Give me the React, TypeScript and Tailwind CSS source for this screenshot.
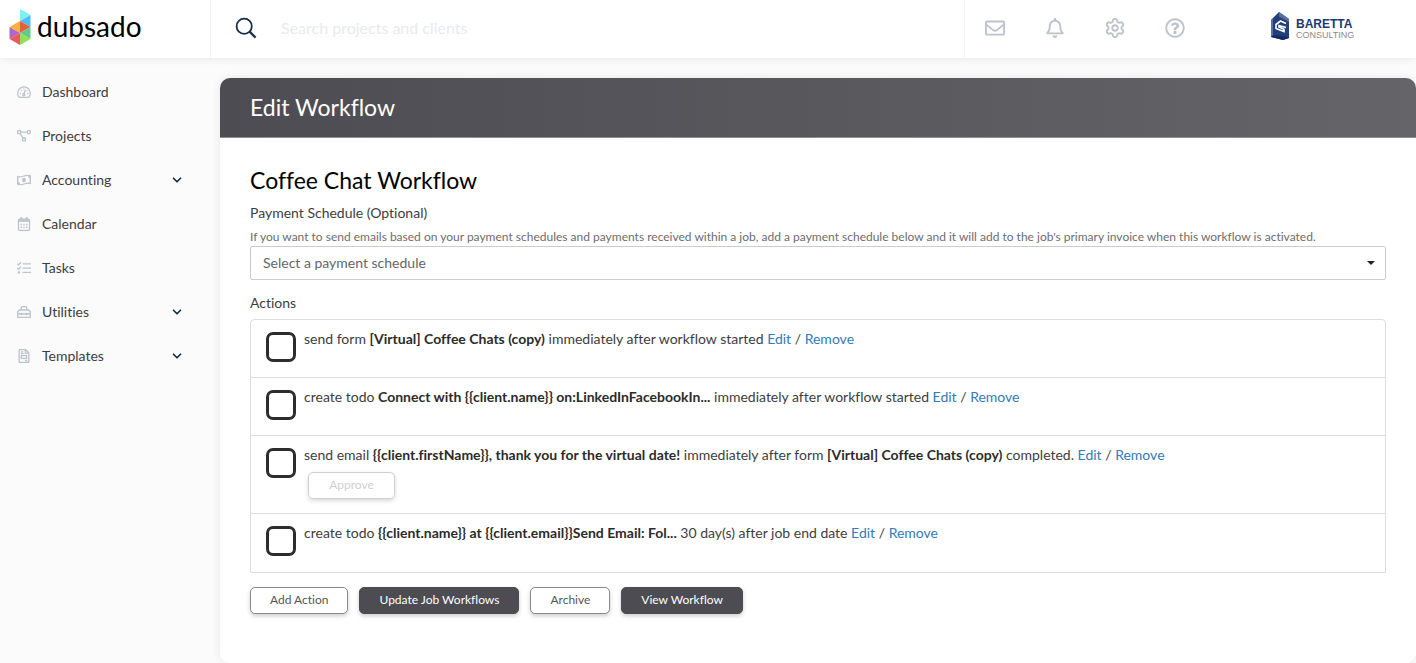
import { ChevronDown, Settings } from "lucide-react";
import { FaRegBell, FaRegEnvelope, FaRegQuestionCircle } from "react-icons/fa";

type Action = {
  id: number;
  verb: string;
  title: string;
  timing: string;
  form?: string;
  suffix?: string;
  needsApproval?: boolean;
};

const actions: Action[] = [
  {
    id: 1,
    verb: "send form",
    title: "[Virtual] Coffee Chats (copy)",
    timing: "immediately after workflow started",
  },
  {
    id: 2,
    verb: "create todo",
    title: "Connect with {{client.name}} on:LinkedInFacebookIn...",
    timing: "immediately after workflow started",
  },
  {
    id: 3,
    verb: "send email",
    title: "{{client.firstName}}, thank you for the virtual date!",
    timing: "immediately after form",
    form: "[Virtual] Coffee Chats (copy)",
    suffix: "completed.",
    needsApproval: true,
  },
  {
    id: 4,
    verb: "create todo",
    title: "{{client.name}} at {{client.email}}Send Email: Fol...",
    timing: "30 day(s) after job end date",
  },
];

const menu = [
  { label: "Dashboard", icon: <DashboardIcon /> },
  { label: "Projects", icon: <ProjectsIcon /> },
  { label: "Accounting", icon: <AccountingIcon />, expandable: true },
  { label: "Calendar", icon: <CalendarIcon /> },
  { label: "Tasks", icon: <TasksIcon /> },
  { label: "Utilities", icon: <UtilitiesIcon />, expandable: true },
  { label: "Templates", icon: <TemplatesIcon />, expandable: true },
];

const menuIcon = {
  viewBox: "0 0 14 14",
  className: "size-3.5",
  fill: "none",
  stroke: "currentColor",
  strokeWidth: 1.3,
};

function DashboardIcon() {
  return (
    <svg {...menuIcon}>
      <path d="M1.900 12A6.300 6.300 0 0 1 .7 8.200a6.300 6.300 0 0 1 12.600 0A6.300 6.300 0 0 1 12.100 12q-.3.400-.8.400H2.700q-.5 0-.8-.4Z" />
      <circle cx="6.700" cy="9.800" r="1.100" />
      <path d="M7 8.700 8.400 4.600" />
      <path d="M2.700 8.500h1.200M4 5l.8.800M6.400 3.900h.9M10.200 8.500h1.200M9.900 5.800l.5-.5" />
    </svg>
  );
}

function ProjectsIcon() {
  return (
    <svg {...menuIcon}>
      <rect x=".7" y="1.700" width="2.900" height="2.900" rx=".5" />
      <rect x="10.400" y="1.700" width="2.900" height="2.900" rx=".5" />
      <rect x="5.500" y="9" width="2.900" height="2.900" rx=".5" />
      <path d="M3.600 3.200h6.800M3.200 4.700 6 9" />
    </svg>
  );
}

function AccountingIcon() {
  return (
    <svg {...menuIcon}>
      <path d="M.7 3.600C3 4.400 5 3.700 7 3s4-1 6.300-.2v7.600C11 9.600 9 10.300 7 11s-4 1-6.300.2Z" />
      <ellipse cx="7" cy="7" rx="1.200" ry="1.700" fill="currentColor" />
      <path d="M.7 9.300c1 0 1.600.7 1.700 1.700M13.300 4.800c-1 0-1.600-.7-1.700-1.800" />
    </svg>
  );
}

function CalendarIcon() {
  return (
    <svg {...menuIcon}>
      <rect x="1.500" y="2.200" width="11" height="11.200" rx="1" />
      <path d="M1.500 3.500h11" strokeWidth="2.600" />
      <path d="M4.300 0v3M9.700 0v3" strokeWidth="1.600" />
      <path
        d="M3.600 7.500H5M6.300 7.500h1.400M9 7.500h1.400M3.600 10.200H5M6.300 10.200h1.400M9 10.200h1.400"
        strokeWidth="1.500"
      />
    </svg>
  );
}

function TasksIcon() {
  return (
    <svg {...menuIcon}>
      <path d="m.4 2.700 1.200 1.200L4 1.300M.4 7l1.200 1.200L4 5.600" />
      <path d="M5.600 2.900H14M5.600 7.200H14M5.600 11.400H14" />
      <circle cx="1.900" cy="11.400" r="1.200" fill="currentColor" stroke="none" />
    </svg>
  );
}

function UtilitiesIcon() {
  return (
    <svg {...menuIcon}>
      <path d="M.7 12.400V6.800L2.400 5h9.200l1.700 1.800v5.600Z" strokeLinejoin="round" />
      <path d="M4.300 5V2.500q0-.8.700-.8h4q.7 0 .7.800V5M.7 9h12.600M4.300 7.700v2.500M9.700 7.700v2.500" />
    </svg>
  );
}

function TemplatesIcon() {
  return (
    <svg {...menuIcon}>
      <path d="M2.200.7h6.600l3 3v9.600H2.200Z" strokeLinejoin="round" />
      <path d="M8.300.7v3.400h3.500M3.900 2.800h2.500M3.900 4.700h2.500M8 11.500h2.300" />
      <rect x="4.400" y="6.500" width="5.200" height="2.900" />
    </svg>
  );
}

function SearchIcon() {
  return (
    <svg viewBox="0 0 22 22" className="size-[22px]" fill="none" stroke="#16304a" strokeWidth="1.800">
      <circle cx="9.200" cy="9.200" r="7.600" />
      <path d="m14.600 14.600 6 6" strokeWidth="2.200" />
    </svg>
  );
}

function DubsadoLogo() {
  return (
    <a href="#" aria-label="dubsado" className="flex items-center gap-1.5 text-black">
      <svg viewBox="0 0 22 36" className="h-9 w-[22px]">
        <path d="M11 0 21.500 6 11 12Z" fill="#7df0f7" />
        <path d="M21.500 6v12L11 12Z" fill="#4fbdf5" />
        <path d="M11 12v12L.5 18Z" fill="#f7b13c" />
        <path d="M11 12l10.500 6L11 24Z" fill="#e2603a" />
        <path d="M.5 18 11 24 .5 30Z" fill="#b067c8" />
        <path d="M11 24v12L.5 30Z" fill="#f0565a" />
        <path d="M21.500 18v12L11 24Z" fill="#62c98a" />
        <path d="M11 24l10.500 6L11 36Z" fill="#93e052" />
      </svg>
      <span className="pb-0.5 text-[28px] leading-8">dubsado</span>
    </a>
  );
}

function BarettaLogo() {
  return (
    <a href="#" aria-label="Baretta Consulting" className="flex items-center gap-1.5">
      <svg viewBox="0 0 19 28" className="h-7 w-[19px]">
        <path d="M8 0 18 7v19l-6 2-12-3V8Z" fill="#233f7b" />
        <path d="M8 0 18 7v3L8 4.500Z" fill="#5a6f9f" />
        <path d="M0 8l2-2v17l-2 2Z" fill="#5a6f9f" />
        <path d="M0 25l3-2 15 2v1l-6 2Z" fill="#122c66" />
        <path
          d="M15 11.500 9.500 9 5 12.500v4l8 3v-2.200L8 15v-1.500l7 2"
          fill="none"
          stroke="#fff"
          strokeWidth="1.600"
        />
      </svg>
      <span className="flex flex-col pt-2 font-['Liberation_Sans',sans-serif]">
        <span className="text-[12px] leading-[11px] font-bold text-[#1c3873]">BARETTA</span>
        <span className="text-[9px] leading-[11px] text-[#8b8b8b]">CONSULTING</span>
      </span>
    </a>
  );
}

function Header() {
  return (
    <header className="relative flex h-[58px] items-center bg-white shadow-[0_1px_8px_rgba(0,0,0,0.08)]">
      <div className="flex h-full w-[211px] shrink-0 items-center border-r border-[#f3f3f3] pb-1 pl-[9px]">
        <DubsadoLogo />
      </div>
      <form
        className="flex h-full flex-1 items-center gap-6 pb-0.5 pl-6"
        onSubmit={(e) => e.preventDefault()}
      >
        <button type="submit" aria-label="Search">
          <SearchIcon />
        </button>
        <input
          type="search"
          aria-label="Search projects and clients"
          placeholder="Search projects and clients"
          className="flex-1 text-base outline-none placeholder:text-[#e9eaef]"
        />
      </form>
      <nav className="flex h-full w-[452px] shrink-0 items-center border-l border-[#f3f3f3] pb-0.5 pl-5 text-[#bcc3cb]">
        <div className="flex items-center gap-10">
          <button aria-label="Messages">
            <FaRegEnvelope size={20} />
          </button>
          <button aria-label="Notifications">
            <FaRegBell size={20} />
          </button>
          <button aria-label="Settings" className="-mx-px">
            <Settings size={22} />
          </button>
          <button aria-label="Help">
            <FaRegQuestionCircle size={20} />
          </button>
        </div>
        <div className="ml-[86px] pb-1">
          <BarettaLogo />
        </div>
      </nav>
    </header>
  );
}

function Sidebar() {
  return (
    <aside className="w-[220px] shrink-0 pt-3">
      <ul>
        {menu.map((item) => (
          <li key={item.label}>
            <a href="#" className="flex h-11 items-center pr-9 pl-[17px] text-sm text-[#3d3d3d]">
              <span className="mr-[11px] text-[#bcc3cb]">{item.icon}</span>
              {item.label}
              {item.expandable && (
                <ChevronDown size={14} strokeWidth={3} className="ml-auto text-[#16304a]" />
              )}
            </a>
          </li>
        ))}
      </ul>
    </aside>
  );
}

function ActionRow({ action }: { action: Action }) {
  return (
    <li className="flex min-h-[58px] gap-2 border-b border-[#dddddd] px-[15px] pt-3 pb-[14px] last:border-b-0">
      <input
        type="checkbox"
        id={`action-${action.id}`}
        className="size-[30px] shrink-0 appearance-none rounded-[7px] border-3 border-[#2d2d2d] bg-white checked:bg-[#2d2d2d]"
      />
      <div>
        <p className="text-sm leading-[14px] text-[#3d3d3d]">
          <label htmlFor={`action-${action.id}`}>
            {action.verb} <strong className="text-[#2b2b2b]">{action.title}</strong> {action.timing}
            {action.form && <strong className="text-[#2b2b2b]"> {action.form}</strong>}
            {action.suffix && ` ${action.suffix}`}
          </label>{" "}
          <a href="#" className="text-[#337ab7]">Edit</a> /{" "}
          <a href="#" className="text-[#337ab7]">Remove</a>
        </p>
        {action.needsApproval && (
          <button
            disabled
            className="mt-2.5 ml-1 h-[27px] w-[87px] rounded-[5px] border border-[#cfcfcf] pb-0.5 text-xs text-[#cfcfcf] shadow-[0_2px_4px_rgba(0,0,0,0.15)]"
          >
            Approve
          </button>
        )}
      </div>
    </li>
  );
}

const buttonBase =
  "h-[27px] rounded-[5px] border px-[19px] pb-0.5 text-xs shadow-[0_2px_4px_rgba(0,0,0,0.2)]";
const lightButton = `${buttonBase} border-[#8a8a8a] bg-white text-[#555555]`;
const darkButton = `${buttonBase} border-[#4d4c52] bg-[#4d4c52] text-white`;

export default function App() {
  return (
    <div className="flex min-h-screen flex-col bg-[#fbfbfb] font-[Lato,sans-serif] [font-variant-ligatures:none]">
      <Header />
      <div className="flex flex-1">
        <Sidebar />
        <main className="mt-5 min-w-0 flex-1 overflow-hidden rounded-[10px] bg-white shadow-[0_0_10px_rgba(0,0,0,0.08)]">
          <div className="flex h-[60px] items-center border-b border-[#8f8e92] bg-linear-to-r from-[#4d4c52] to-[#656469] px-[30px]">
            <h1 className="text-[23px] text-white">Edit Workflow</h1>
          </div>

          <div className="px-[30px] pt-7">
            <h2 className="text-[23px] leading-7 text-black">Coffee Chat Workflow</h2>

            {/* Payment schedule */}
            <label htmlFor="schedule" className="mt-[11px] block text-sm leading-4 text-[#3d3d3d]">
              Payment Schedule (Optional)
            </label>
            <p className="mt-2 mb-px text-xs leading-4 text-[#6d6d6d]">
              If you want to send emails based on your payment schedules and payments received within a job,
              add a payment schedule below and it will add to the job's primary invoice when this workflow is
              activated.
            </p>
            <div className="relative">
              <select
                id="schedule"
                className="h-[34px] w-full appearance-none rounded-xs border border-[#cccccc] bg-white px-3 text-sm text-[#666666]"
              >
                <option>Select a payment schedule</option>
              </select>
              <svg
                viewBox="0 0 8 4"
                className="pointer-events-none absolute top-[15px] right-[11px] h-1 w-2"
              >
                <path d="M0 0h8L4 4Z" fill="#222" />
              </svg>
            </div>

            {/* Actions */}
            <h3 className="mt-[15px] text-sm leading-4 text-[#3d3d3d]">Actions</h3>
            <ul className="mt-2 rounded-t border border-[#dddddd]">
              {actions.map((action) => (
                <ActionRow key={action.id} action={action} />
              ))}
            </ul>

            <div className="mt-[14px] flex gap-[11px]">
              <button className={lightButton}>Add Action</button>
              <button className={darkButton}>Update Job Workflows</button>
              <button className={lightButton}>Archive</button>
              <button className={darkButton}>View Workflow</button>
            </div>
          </div>
        </main>
      </div>
    </div>
  );
}
